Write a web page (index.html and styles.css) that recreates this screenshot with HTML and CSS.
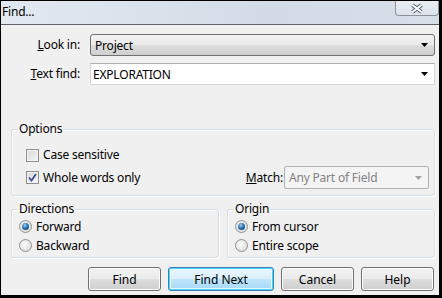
FILE: index.html
```html
<!DOCTYPE html>
<html>
<head>
<meta charset="utf-8">
<title>Find...</title>
<link rel="stylesheet" href="styles.css">
</head>
<body>
<div class="dlg">
  <div class="titlebar">
    <span class="title">Find...</span>
    <span class="close">
      <svg width="14" height="11" viewBox="0 0 14 11">
        <path d="M2.5 2 L11.5 9 M11.5 2 L2.5 9" stroke="#56606b" stroke-width="4" fill="none"/>
        <path d="M2.5 2 L11.5 9 M11.5 2 L2.5 9" stroke="#ffffff" stroke-width="2" fill="none"/>
      </svg>
    </span>
  </div>
  <div class="content">
    <div class="row">
      <label class="lbl"><u>L</u>ook in:</label>
      <div class="combo">
        <span>Project</span>
        <svg class="arrow" width="7" height="4" viewBox="0 0 7 4"><path d="M0 0 H7 L3.5 4 Z" fill="#000"/></svg>
      </div>
    </div>
    <div class="row row2">
      <label class="lbl"><u>T</u>ext find:</label>
      <div class="edit">
        <span>EXPLORATION</span>
        <svg class="arrow" width="7" height="4" viewBox="0 0 7 4"><path d="M0 0 H7 L3.5 4 Z" fill="#000"/></svg>
      </div>
    </div>

    <fieldset class="group options">
      <legend>Options</legend>
      <div class="check"><span class="cb"></span>Case sensitive</div>
      <div class="optrow">
        <div class="check">
          <span class="cb">
            <svg width="9" height="9" viewBox="0 0 9 9"><path d="M1 4.5 L3.5 7.5 L8 1" stroke="#3a4f8a" stroke-width="1.8" fill="none"/></svg>
          </span>Whole words only
        </div>
        <div class="match">
          <label class="mlbl"><u>M</u>atch:</label>
          <div class="combo dis">
            <span>Any Part of Field</span>
            <svg class="arrow" width="7" height="4" viewBox="0 0 7 4"><path d="M0 0 H7 L3.5 4 Z" fill="#a2a2a2"/></svg>
          </div>
        </div>
      </div>
    </fieldset>

    <div class="groups">
      <fieldset class="group half">
        <legend>Directions</legend>
        <div class="radio"><span class="rb on"></span>Forward</div>
        <div class="radio"><span class="rb"></span>Backward</div>
      </fieldset>
      <fieldset class="group half">
        <legend>Origin</legend>
        <div class="radio"><span class="rb on"></span>From cursor</div>
        <div class="radio"><span class="rb"></span>Entire scope</div>
      </fieldset>
    </div>

    <div class="buttons">
      <button class="btn">Find</button>
      <button class="btn def">Find Next</button>
      <button class="btn">Cancel</button>
      <button class="btn">Help</button>
    </div>
  </div>
</div>
</body>
</html>
```

FILE: styles.css
```css
*{margin:0;padding:0;box-sizing:border-box;}
body{background:#000;font-family:"Noto Sans","Liberation Sans",sans-serif;font-size:12px;letter-spacing:-0.2px;color:#000;}
.dlg{width:442px;height:298px;border:1px solid #000;border-right-width:3px;border-bottom-width:3px;background:#f0f0f0;display:flex;flex-direction:column;}

.titlebar{height:24px;border-bottom:1px solid #5f656b;background:linear-gradient(to right,#e2e9f1,#d3dce6 60%,#d6dee8);display:flex;justify-content:space-between;align-items:flex-start;}
.title{padding:3px 0 0 1px;line-height:16px;}
.close{width:44px;height:15px;border:1px solid #8c939b;border-top:none;border-radius:0 0 4px 4px;background:linear-gradient(#e9eef4,#dce3eb);display:flex;justify-content:center;align-items:center;}

.content{flex:1;padding:9px 4px 0 10px;display:flex;flex-direction:column;}
.row{display:flex;align-items:center;}
.row2{margin-top:7px;}
.lbl{width:69px;margin-right:10px;text-align:right;line-height:16px;}
.combo{flex:1;height:22px;border:1px solid #707070;border-radius:3px;background:linear-gradient(#f2f2f2,#ebebeb 50%,#dddddd 51%,#cfcfcf);display:flex;align-items:center;justify-content:space-between;padding:0 6px 0 4px;}
.edit{flex:1;height:22px;border:1px solid #d3d7dc;border-top-color:#abadb3;background:#fff;display:flex;align-items:center;justify-content:space-between;padding:0 6px 0 2px;}
.arrow{display:block;}

.group{border:1px solid #d5dfe5;border-radius:3px;box-shadow:inset 1px 1px #fff,1px 1px #fff;min-width:0;padding:0 5px 6px 6px;}
.group legend{line-height:16px;padding:0 1px;}
.options{margin-top:36px;padding-top:10px;}
.options .check{margin-left:8px;}
.optrow{display:flex;justify-content:space-between;align-items:center;margin-top:3px;height:23px;}
.check{display:flex;align-items:center;line-height:16px;}
.cb{width:13px;height:13px;border:1px solid #8e8f8f;background:linear-gradient(135deg,#d9d9d9,#f6f6f6);box-shadow:inset 0 0 0 1px #f4f4f4;margin-right:4px;display:flex;align-items:center;justify-content:center;}
.match{display:flex;align-items:center;}
.mlbl{margin-right:1px;line-height:16px;}
.combo.dis{flex:none;width:145px;height:23px;border-color:#adb2b5;border-radius:2px;background:#f4f4f4;color:#838383;}

.groups{display:flex;gap:8px;margin-top:5px;}
.half{flex:1;padding:0 5px 2px 6px;}
.radio{display:flex;align-items:center;height:19px;}
.half .radio{margin-left:1px;}
.rb{width:13px;height:13px;border-radius:50%;border:1px solid #8e8f8f;background:radial-gradient(circle at 40% 40%,#fbfbfb,#d5d5d5);margin-right:4px;display:flex;align-items:center;justify-content:center;}
.rb.on::after{content:"";width:7px;height:7px;border-radius:50%;background:radial-gradient(circle at 40% 35%,#a8d6f6,#1f6aa8 50%,#0f3f6e);}

.buttons{display:flex;justify-content:flex-end;gap:7px;margin-top:9px;padding-right:1px;}
.btn{height:24px;width:73px;font:inherit;color:#000;border:1px solid #707070;border-radius:3px;background:linear-gradient(#f2f2f2,#ebebeb 50%,#dddddd 51%,#cfcfcf);box-shadow:inset 0 0 0 1px #fcfcfc;}
.btn.def{width:106px;border-color:#3c7fb1;background:linear-gradient(#eaf6fd,#d9f0fc 50%,#bee6fd 51%,#a7d9f5);box-shadow:inset 0 0 0 1px #48d5fd,inset 0 0 0 2px #e6f6fd;}
```
